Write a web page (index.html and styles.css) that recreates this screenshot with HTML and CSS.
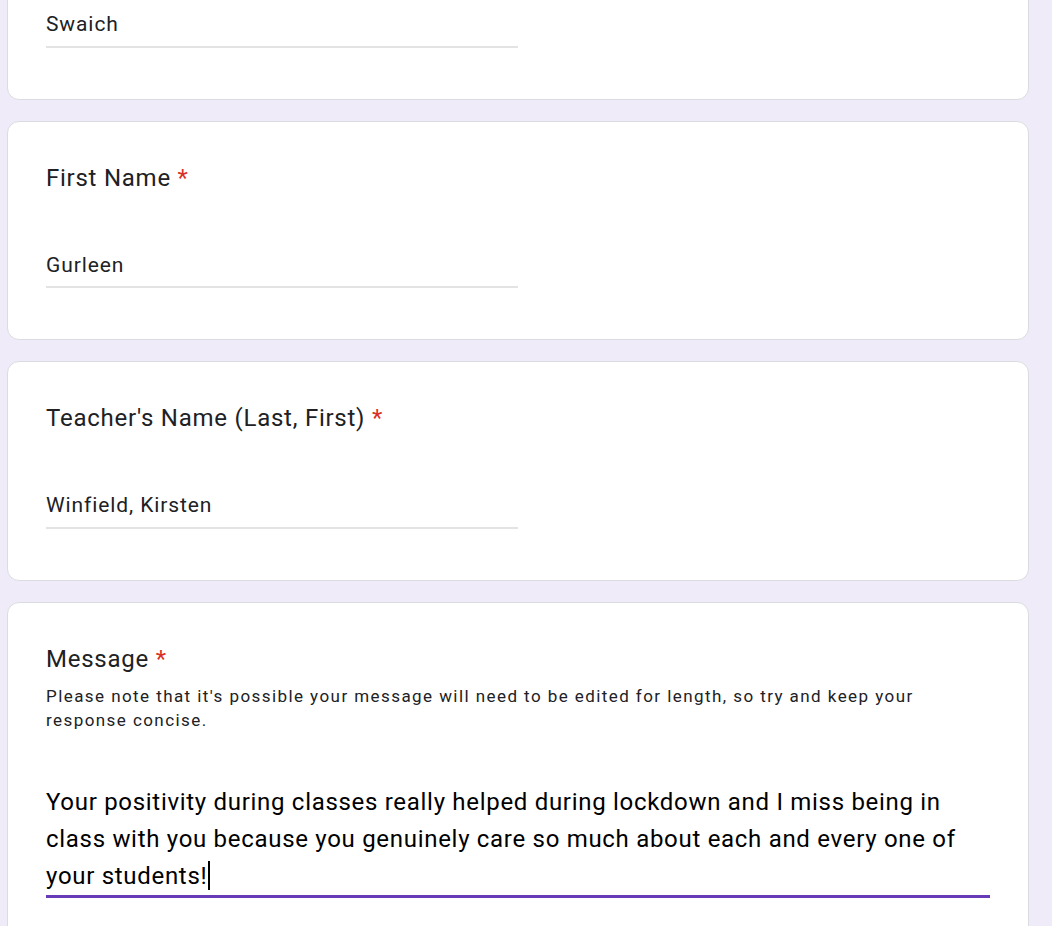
FILE: index.html
```html
<!DOCTYPE html>
<html lang="en">
<head>
<meta charset="utf-8">
<title>Form</title>
<link rel="stylesheet" href="styles.css">
</head>
<body>
<main class="form">
  <section class="card">
    <div class="label">Last Name <span class="req">*</span></div>
    <div class="answer">Swaich</div>
  </section>
  <section class="card">
    <div class="label">First Name <span class="req">*</span></div>
    <div class="answer">Gurleen</div>
  </section>
  <section class="card">
    <div class="label">Teacher's Name (Last, First) <span class="req">*</span></div>
    <div class="answer">Winfield, Kirsten</div>
  </section>
  <section class="card card-last">
    <div class="label">Message <span class="req">*</span></div>
    <div class="desc">Please note that it's possible your message will need to be edited for length, so try and keep your response concise.</div>
    <div class="long-answer">Your positivity during classes really helped during lockdown and I miss being in class with you because you genuinely care so much about each and every one of your students!<span class="caret"></span></div>
  </section>
</main>
</body>
</html>
```

FILE: styles.css
```css
html, body {
  margin: 0;
  padding: 0;
  background: #f0ebf8;
  overflow: hidden;
}

.form {
  display: flex;
  flex-direction: column;
  gap: 21px;
  margin-top: -120px;
  padding-left: 7px;
}

.card {
  box-sizing: border-box;
  width: 1022px;
  background: #fff;
  border: 1px solid #dadce0;
  border-radius: 12px;
  padding: 38px 38px 51px 38px;
  color: #202124;
}

.label {
  font-family: Roboto, "Noto Sans", sans-serif;
  font-size: 24px;
  line-height: 36px;
  letter-spacing: 0.75px;
  color: #202124;
}

.req {
  color: #d93025;
}

.answer {
  width: 472px;
  margin-top: 54px;
  font-family: Roboto, "Noto Sans", sans-serif;
  font-size: 21px;
  line-height: 31.5px;
  letter-spacing: 0.9px;
  padding-bottom: 5px;
  border-bottom: 2px solid #e3e3e3;
  color: #202124;
}

.desc {
  margin-top: 7px;
  width: 900px;
  font-family: Roboto, "Noto Sans", sans-serif;
  font-size: 17px;
  line-height: 24px;
  letter-spacing: 1.43px;
  color: #202124;
}

.long-answer {
  width: 944px;
  margin-top: 52px;
  font-family: Roboto, "Noto Sans", sans-serif;
  font-size: 24px;
  line-height: 37px;
  letter-spacing: 0.7px;
  color: #000;
  border-bottom: 3px solid #673ab7;
}

.caret {
  display: inline-block;
  width: 2px;
  height: 29px;
  background: #000;
  vertical-align: -6px;
  margin-left: 1px;
}
```
